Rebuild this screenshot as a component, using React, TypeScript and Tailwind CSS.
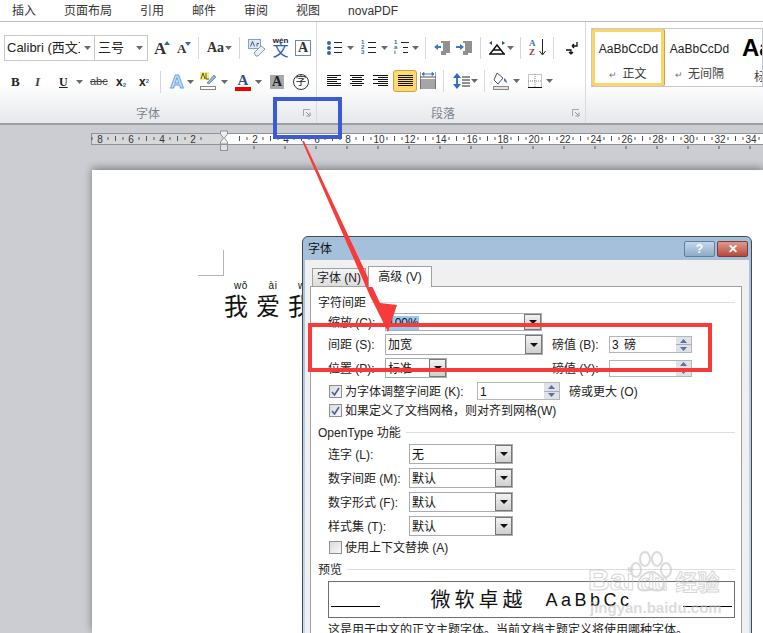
const sans = "font-['Liberation_Sans','Noto_Sans_CJK_SC',sans-serif]";

const menuItems = [
  { name: "插入", cls: "ml-[12px]" },
  { name: "页面布局", cls: "ml-[28px]" },
  { name: "引用", cls: "ml-[28px]" },
  { name: "邮件", cls: "ml-[28px]" },
  { name: "审阅", cls: "ml-[28px]" },
  { name: "视图", cls: "ml-[28px]" },
  { name: "novaPDF", cls: "ml-[28px]" },
];

const Caret = ({ className = "" }: { className?: string }) => (
  <svg width="7" height="4" viewBox="0 0 7 4" className={className}>
    <path d="M0 0h7L3.5 4z" fill="#6a6a6a" />
  </svg>
);

const BlueTri = ({ up = false }: { up?: boolean }) => (
  <svg width="6" height="4" viewBox="0 0 6 4" className="shrink-0">
    <path d={up ? "M0 4h6L3 0z" : "M0 0h6L3 4z"} fill="#3565b0" />
  </svg>
);

const Sep = ({ className = "" }: { className?: string }) => (
  <div className={`w-px h-[22px] bg-[#d5d7db] ${className}`} />
);

// horizontal text lines, used by the alignment buttons
const Lines = ({ rows, className = "" }: { rows: [number, number][]; className?: string }) => (
  <svg width="16" height="14" viewBox="0 0 16 14" className={className}>
    {rows.map(([x, w], i) => (
      <rect key={i} x={x} y={1 + i * 2} width={w} height="1" fill="#111" />
    ))}
  </svg>
);

const ListIcon = ({ marks, indent = false }: { marks: string[]; indent?: boolean }) => (
  <div className="w-[15px] h-[15px] flex flex-col">
    {marks.map((m, i) => (
      <div key={i} className="flex items-center h-[5px]">
        {m === "dot" ? (
          <span className="w-[4px] h-[4px] mr-[2px] rounded-full bg-[#3565b0] shrink-0" />
        ) : (
          <span className="w-[6px] text-[6px] leading-[5px] font-bold text-[#3565b0] shrink-0">{m}</span>
        )}
        <div className={`h-px bg-[#222] ${indent && i > 0 ? "ml-[3px] w-[5px]" : "ml-[1px] w-[8px]"}`} />
      </div>
    ))}
  </div>
);

const Launcher = ({ className = "" }: { className?: string }) => (
  <svg width="8" height="8" viewBox="0 0 8 8" className={className}>
    <path d="M.5 7V.5H7" fill="none" stroke="#a3a7ad" />
    <path d="M3 3l3 3M7 3.500V7H3.500" fill="none" stroke="#8f949b" />
  </svg>
);

const FontRibbon = () => (
  <div className="relative w-[317px] border-r border-[#d8dade] flex flex-col">
    <div className="flex items-center h-[26px] mt-[13px] pl-[4px]">
      <div className="w-[91px] h-[26px] border border-[#c4c8ce] bg-white flex items-center pl-[2px] text-[13px] text-[#222]">
        <span className="w-[73px] overflow-hidden whitespace-nowrap">Calibri (西文正文)</span>
        <Caret className="ml-[4px]" />
      </div>
      <div className="w-[53px] h-[26px] border border-l-0 border-[#c4c8ce] bg-white flex items-center pl-[3px] text-[13px] text-[#222]">
        <span className="w-[38px]">三号</span>
        <Caret />
      </div>
      <div className="ml-[6px] w-[16px] flex items-start font-['Liberation_Serif'] font-bold text-[17px] leading-none text-[#333]">
        A
        <span className="-ml-[2px] mt-[1px]">
          <BlueTri up />
        </span>
      </div>
      <div className="ml-[7px] w-[14px] flex items-start font-['Liberation_Serif'] font-bold text-[13px] leading-none text-[#333]">
        A
        <span className="-ml-[1px]">
          <BlueTri />
        </span>
      </div>
      <Sep className="ml-[7px]" />
      <div className="ml-[8px] w-[25px] flex items-center font-['Liberation_Serif'] font-bold text-[14px] leading-none text-[#333]">
        Aa
        <Caret className="ml-[1px]" />
      </div>
      <Sep className="ml-[7px]" />
      <svg width="18" height="18" viewBox="0 0 18 18" className="ml-[8px]">
        <rect x=".5" y=".5" width="12" height="9" fill="#dbe8f6" stroke="#7ca3d0" />
        <path d="M6 14l7-7 4 3-7 7H8z" fill="#eef0f3" stroke="#8a95a3" />
        <path d="M2.500 7.500l2-5 2 5M9 7.500V4.500h2" fill="none" stroke="#335" strokeWidth=".8" />
      </svg>
      <div className="ml-[6px] w-[17px] flex flex-col items-center leading-none">
        <span className="text-[8px] font-bold text-[#222] -mb-[2px]">wén</span>
        <span className="text-[16px] text-[#2c5fb3]">文</span>
      </div>
      <div className="ml-[6px] w-[16px] h-[16px] border border-[#6d8bab] bg-white flex items-center justify-center font-['Liberation_Serif'] font-bold text-[14px] leading-none text-[#333]">
        A
      </div>
    </div>
    <div className="flex items-center h-[26px] mt-[8px] pl-[11px] text-[#222]">
      <span className="w-[24px] font-['Liberation_Serif'] font-bold text-[13px]">B</span>
      <span className="w-[22px] font-['Liberation_Serif'] font-bold italic text-[13px] text-[#444]">I</span>
      <span className="ml-[2px] w-[16px] font-['Liberation_Serif'] font-bold text-[12px] underline">U</span>
      <Caret className="ml-[1px]" />
      <span className="ml-[7px] w-[24px] text-[11px] line-through text-[#444]">abc</span>
      <span className="ml-[2px] w-[23px] font-bold text-[12px] leading-none">
        x<sub className="text-[6px] text-[#3565b0]">2</sub>
      </span>
      <span className="w-[20px] font-bold text-[12px] leading-none">
        x<sup className="text-[6px] text-[#3565b0]">2</sup>
      </span>
      <Sep className="ml-[1px]" />
      <span className="ml-[9px] w-[15px] font-bold text-[19px] leading-none text-[#cfe4fa] [-webkit-text-stroke:1px_#6fa4de]">A</span>
      <Caret className="ml-[2px]" />
      <svg width="17" height="19" viewBox="0 0 17 19" className="ml-[6px]">
        <rect x="0" y="0" width="9" height="8" fill="#f5f06a" />
        <path d="M1 7l2-6 2 6M6 1v6h3" fill="none" stroke="#333" strokeWidth=".8" />
        <path d="M7 11l7-8 2 2-7 7z" fill="#8fb3da" stroke="#55779c" strokeWidth=".7" />
        <rect x=".5" y="14.500" width="15" height="3" fill="#fff" stroke="#888" />
      </svg>
      <Caret className="ml-[4px]" />
      <div className="ml-[7px] w-[16px] flex flex-col items-center leading-none">
        <span className="font-['Liberation_Serif'] font-bold text-[15px] -mb-px text-[#2f4f8f]">A</span>
        <div className="w-[16px] h-[4px] bg-[#f00000]" />
      </div>
      <Caret className="ml-[4px]" />
      <div className="ml-[8px] w-[14px] h-[14px] bg-[#a6a8ab] flex items-center justify-center font-['Liberation_Serif'] font-bold text-[14px] leading-none text-[#222]">
        A
      </div>
      <div className="ml-[9px] w-[16px] h-[16px] rounded-full border border-[#333] flex items-center justify-center text-[11px] leading-none">
        字
      </div>
    </div>
    <div className="flex-1 relative flex items-center justify-center pr-[20px] pt-[11px] text-[12px] text-[#7c8590]">
      字体
      <Launcher className="absolute right-[5px] top-[15px]" />
    </div>
  </div>
);

const ParagraphRibbon = () => (
  <div className="relative w-[269px] border-r border-[#d8dade] flex flex-col">
    <div className="flex items-center h-[26px] mt-[13px] pl-[10px]">
      <ListIcon marks={["dot", "dot", "dot"]} />
      <Caret className="ml-[5px]" />
      <div className="ml-[7px]">
        <ListIcon marks={["1", "2", "3"]} />
      </div>
      <Caret className="ml-[5px]" />
      <div className="ml-[6px]">
        <ListIcon marks={["1", "a", "i"]} indent />
      </div>
      <Caret className="ml-[3px]" />
      <Sep className="ml-[6px]" />
      <svg width="17" height="14" viewBox="0 0 17 14" className="ml-[8px]">
        <path d="M7 1h9M9 3h7M9 5h7M9 7h7M9 9h7M7 11h9M7 13h5" stroke="#222" />
        <path d="M0 6l4-3v2h3v2H4v2z" fill="#3a78c8" />
      </svg>
      <svg width="17" height="14" viewBox="0 0 17 14" className="ml-[5px]">
        <path d="M7 1h9M9 3h7M9 5h7M9 7h7M9 9h7M7 11h9M7 13h5" stroke="#222" />
        <path d="M8 6L4 3v2H0v2h4v2z" fill="#3a78c8" />
      </svg>
      <Sep className="ml-[7px]" />
      <svg width="17" height="14" viewBox="0 0 17 14" className="ml-[8px]">
        <path d="M1 13L8 4l7 9M4 9h8M0 13h16" fill="none" stroke="#111" strokeWidth="1.4" />
        <path d="M0 2l3-2v4zM16 2l-3-2v4zM3 1.500h2M11 1.500h2" fill="#1f4f9c" />
      </svg>
      <Caret className="ml-[1px]" />
      <Sep className="ml-[6px]" />
      <div className="ml-[8px] w-[10px] flex flex-col font-['Liberation_Serif'] font-bold text-[9px] leading-[9px]">
        <span className="text-[#3a6fb5]">A</span>
        <span className="text-[#a33]">Z</span>
      </div>
      <svg width="7" height="17" viewBox="0 0 7 17">
        <path d="M3.500 0v15M0.500 12l3 4 3-4" fill="none" stroke="#222" />
      </svg>
      <Sep className="ml-[7px]" />
      <svg width="13" height="14" viewBox="0 0 13 14" className="ml-[11px]">
        <path d="M12 1v4H7M7 5l2-2M7 5l2 2M1 9h5v4M6 13l-2-2M6 13l2-2" fill="none" stroke="#111" strokeWidth="1.3" />
      </svg>
    </div>
    <div className="flex items-center h-[26px] mt-[8px] pl-[10px]">
      <Lines rows={[[0, 14], [0, 10], [0, 14], [0, 10], [0, 14], [0, 14]]} />
      <Lines className="ml-[7px]" rows={[[0, 14], [2, 10], [0, 14], [2, 10], [0, 14], [2, 10]]} />
      <Lines className="ml-[7px]" rows={[[0, 15], [5, 10], [0, 15], [5, 10], [0, 15], [5, 10]]} />
      <div className="ml-[4px] w-[24px] h-[22px] rounded-[3px] border border-[#c9a24a] bg-[#ffd96e] flex items-center justify-center">
        <Lines className="ml-[1px]" rows={[[0, 15], [0, 15], [0, 15], [0, 15], [0, 15], [0, 15]]} />
      </div>
      <svg width="16" height="18" viewBox="0 0 16 18" className="ml-[3px]">
        <path d="M0 5h16M0 8h16M0 10h16M0 12h16M0 14h16M0 16h16M0 0v17M16 0v17" stroke="#222" strokeWidth=".8" />
        <path d="M2 2h12M2 2l2-1.500v3zM14 2l-2-1.500v3z" stroke="#3a78c8" fill="#3a78c8" />
      </svg>
      <Sep className="ml-[7px]" />
      <svg width="8" height="16" viewBox="0 0 8 16" className="ml-[9px]">
        <path d="M4 1v14" stroke="#3a78c8" strokeWidth="2" />
        <path d="M0 5l4-5 4 5zM0 11l4 5 4-5z" fill="#2f6bc0" />
      </svg>
      <svg width="9" height="12" viewBox="0 0 9 12">
        <path d="M1 2h8M1 5h8M1 8h8M1 11h8" stroke="#222" />
      </svg>
      <Caret className="ml-[1px]" />
      <Sep className="ml-[6px]" />
      <svg width="16" height="18" viewBox="0 0 16 18" className="ml-[8px]">
        <path d="M4 1l6 5-5 6-4-4z" fill="#fff" stroke="#555" />
        <path d="M11 6c2 1 3 3 3 5l-3-2z" fill="#3a78c8" />
        <rect x=".5" y="14.500" width="15" height="3" fill="#e3e3e3" stroke="#888" />
      </svg>
      <Caret className="ml-[4px]" />
      <svg width="14" height="14" viewBox="0 0 14 14" className="ml-[8px]">
        <rect x=".5" y=".5" width="13" height="13" fill="none" stroke="#888" strokeDasharray="1 1" />
        <path d="M7 0v14M0 7h14" stroke="#888" strokeDasharray="1 1" />
        <path d="M0 13.500h14" stroke="#111" />
      </svg>
      <Caret className="ml-[4px]" />
    </div>
    <div className="flex-1 relative flex items-center justify-center pr-[16px] pt-[11px] text-[12px] text-[#7c8590]">
      段落
      <Launcher className="absolute right-[5px] top-[15px]" />
    </div>
  </div>
);

const StylesRibbon = () => (
  <div className="flex-1 pl-[5px] pt-[6px] min-w-0">
    <div className="flex h-[59px] border border-[#c4c8ce] bg-white overflow-hidden">
      <div className="w-[72px] shrink-0 rounded-[2px] border-[3px] border-[#fbd568] outline outline-[#c9a24a] flex flex-col items-center text-[12px] text-[#222]">
        <span className="ml-[1px] mt-[9px] leading-[16px]">AaBbCcDd</span>
        <span className="mt-[9px] leading-[16px] text-[12px] text-[#333]">
          <span className="text-[#777] text-[9px] mr-[5px]">↵</span>正文
        </span>
      </div>
      <div className="w-[71px] shrink-0 flex flex-col items-center text-[12px] text-[#222]">
        <span className="mt-[12px] leading-[16px]">AaBbCcDd</span>
        <span className="mt-[9px] leading-[16px] text-[#444]">
          <span className="text-[#777] text-[9px] mr-[5px]">↵</span>无间隔
        </span>
      </div>
      <div className="flex flex-col pl-[7px] whitespace-nowrap">
        <span className="font-bold text-[24px] leading-[28px] mt-[5px] text-black">AaB</span>
        <span className="mt-[7px] pl-[12px] text-[12px] leading-[16px] text-[#444]">标题 1</span>
      </div>
    </div>
  </div>
);

const rulerLeft = [
  { x: 100, t: "8" },
  { x: 131, t: "6" },
  { x: 162, t: "4" },
  { x: 193, t: "2" },
];
const rulerRight = Array.from({ length: 17 }, (_, i) => ({ x: 255 + i * 31, t: String((i + 1) * 2) }));

const Ruler = () => (
  <svg width="763" height="24" viewBox="0 0 763 24" className="block mt-[5px]">
    <rect x="91.500" y="3.500" width="680" height="11" fill="#fff" stroke="#8f9297" />
    <rect x="92" y="4" width="132" height="10" fill="#d6d8da" />
    {[...rulerLeft, ...rulerRight].map((m) => (
      <g key={m.x}>
        <text x={m.x} y="13" textAnchor="middle" fontSize="10" fontFamily="Liberation Sans" fill="#333">
          {m.t}
        </text>
        <path d={`${m.x > 100 ? `M${m.x - 15.500} 6v5` : ""}M${m.x - 8} 7v3M${m.x + 8} 7v3`} stroke="#555" />
      </g>
    ))}
    {rulerRight.map((m) => (
      <path key={m.x} d={`M${m.x - 1} 16v3`} stroke="#555" />
    ))}
    <path d="M220.500 1h7v3l-3 4 3 4v2h-7v-2l3-4-3-4z" fill="#eceef0" stroke="#8f9297" />
    <rect x="220.500" y="14.500" width="7" height="6" fill="#dfe1e4" stroke="#8f9297" />
  </svg>
);

const Combo = ({ text, className = "", selected = false }: { text: string; className?: string; selected?: boolean }) => (
  <div className={`flex items-center border border-[#a9abb0] bg-white pl-[2px] ${className}`}>
    <span className="flex-1 pt-[1px] text-[12px] leading-none text-[#111]">
      <span className={selected ? "bg-[#99c9ef]" : ""}>{text}</span>
    </span>
    <div className="w-[17px] h-full border border-[#777] bg-gradient-to-b from-[#f2f2f2] to-[#cfcfcf] flex items-center justify-center">
      <svg width="8" height="4" viewBox="0 0 8 4">
        <path d="M0 0h8L4 4z" fill="#111" />
      </svg>
    </div>
  </div>
);

const Spin = ({ text, className = "" }: { text: string; className?: string }) => (
  <div className={`flex items-center border border-[#b4b6ba] bg-white pl-[2px] ${className}`}>
    <span className="flex-1 pt-[1px] text-[12px] leading-none tracking-[1px] text-[#111]">{text}</span>
    <div className="w-[15px] h-full flex flex-col bg-[#dfe3e8]">
      <div className="flex-1 flex items-center justify-center border-b border-[#a8adb3]">
        <svg width="7" height="4" viewBox="0 0 7 4">
          <path d="M0 4h7L3.500 0z" fill="#5a6fa8" />
        </svg>
      </div>
      <div className="flex-1 flex items-center justify-center">
        <svg width="7" height="4" viewBox="0 0 7 4">
          <path d="M0 0h7L3.500 4z" fill="#5a6fa8" />
        </svg>
      </div>
    </div>
  </div>
);

const Check = ({ on = false }: { on?: boolean }) => (
  <div className="w-[13px] h-[13px] border border-[#8e8f8f] bg-gradient-to-br from-[#dcdcdc] to-[#f6f6f6] flex items-center justify-center shrink-0">
    {on && (
      <svg width="9" height="9" viewBox="0 0 9 9">
        <path d="M1 5l2.500 3L8 1" fill="none" stroke="#4a5f97" strokeWidth="1.600" />
      </svg>
    )}
  </div>
);

const SectionTitle = ({ text, className = "" }: { text: string; className?: string }) => (
  <div className={`flex items-center h-[16px] pl-[7px] pr-[6px] text-[12px] text-[#222] ${className}`}>
    <span className="whitespace-nowrap">{text}</span>
    <div className="flex-1 h-px ml-[5px] bg-[#d5dfe5]" />
  </div>
);

const openTypeRows = [
  { label: "连字 (L):", value: "无" },
  { label: "数字间距 (M):", value: "默认" },
  { label: "数字形式 (F):", value: "默认" },
  { label: "样式集 (T):", value: "默认" },
];

const FontDialog = () => (
  <div className="absolute left-[302px] top-[236px] w-[450px] h-[420px] rounded-t-[6px] border border-[#444a50] bg-gradient-to-b from-[#a4bfda] to-[#c8dcef] flex flex-col px-[1px]">
    <div className="h-[23px] flex items-center pl-[4px] text-[12px] text-[#111]">
      <span className="flex-1 mt-[1px]">字体</span>
      <div className="w-[31px] h-[16px] rounded-[2px] border border-[#5f7f9e] bg-gradient-to-b from-[#c5d8ea] to-[#8fabc7] flex items-center justify-center text-[12px] font-bold leading-none text-white">
        ?
      </div>
      <div className="ml-[2px] mr-[2px] w-[31px] h-[16px] rounded-[2px] border border-[#7c3c34] bg-gradient-to-b from-[#dd9a8f] to-[#b7483b] flex items-center justify-center text-[12px] font-bold leading-none text-white">
        ✕
      </div>
    </div>
    <div className="flex-1 mx-[1px] bg-[#f0f0f0] flex flex-col pl-[5px] pr-[7px]">
      <div className="flex items-end h-[26px] pl-[2px] text-[12px] text-[#222]">
        <div className="w-[54px] h-[18px] border border-b-0 border-[#a0a0a0] bg-gradient-to-b from-[#f4f4f4] to-[#dcdcdc] flex items-center justify-center">
          字体 (N)
        </div>
        <div className="w-[64px] h-[21px] ml-[2px] -mb-px z-10 border border-b-0 border-[#a0a0a0] bg-white flex items-center justify-center">
          高级 (V)
        </div>
      </div>
      <div className="flex-1 border border-[#a0a0a0] bg-white flex flex-col text-[12px] text-[#222] [&>div>span]:pt-[1px]">
        <SectionTitle text="字符间距" className="mt-[7px]" />
        <div className="flex items-center h-[18px] mt-[3px] pl-[17px]">
          <span className="w-[57px] whitespace-nowrap">缩放 (C):</span>
          <Combo text="100%" selected className="w-[157px] h-[18px]" />
        </div>
        <div className="flex items-center h-[21px] mt-[3px] pl-[17px]">
          <span className="w-[57px] whitespace-nowrap">间距 (S):</span>
          <Combo text="加宽" className="w-[158px] h-[21px]" />
          <span className="ml-[9px] w-[57px] whitespace-nowrap">磅值 (B):</span>
          <Spin text="3 磅" className="w-[83px] h-[17px]" />
        </div>
        <div className="flex items-center h-[20px] mt-[3px] pl-[17px]">
          <span className="w-[57px] whitespace-nowrap">位置 (P):</span>
          <Combo text="标准" className="w-[62px] h-[20px]" />
          <span className="ml-[105px] w-[57px] whitespace-nowrap">磅值 (Y):</span>
          <Spin text="" className="w-[83px] h-[17px]" />
        </div>
        <div className="flex items-center h-[18px] mt-[4px] pl-[18px]">
          <Check on />
          <span className="ml-[3px] w-[132px] whitespace-nowrap">为字体调整字间距 (K):</span>
          <Spin text="1" className="w-[83px] h-[18px]" />
          <span className="ml-[9px] whitespace-nowrap">磅或更大 (O)</span>
        </div>
        <div className="flex items-center h-[18px] mt-[1px] pl-[18px]">
          <Check on />
          <span className="ml-[3px] whitespace-nowrap">如果定义了文档网格，则对齐到网格(W)</span>
        </div>
        <SectionTitle text="OpenType 功能" className="mt-[5px]" />
        {openTypeRows.map((r) => (
          <div key={r.label} className="flex items-center h-[20px] mt-[4px] pl-[17px]">
            <span className="w-[81px] whitespace-nowrap">{r.label}</span>
            <Combo text={r.value} className="w-[104px] h-[20px]" />
          </div>
        ))}
        <div className="flex items-center h-[18px] mt-[2px] pl-[18px]">
          <Check />
          <span className="ml-[3px] whitespace-nowrap">使用上下文替换 (A)</span>
        </div>
        <SectionTitle text="预览" className="mt-[5px]" />
        <div className="relative mt-[4px] ml-[17px] mr-[6px] h-[37px] border border-[#6e6e6e] flex items-center justify-center">
          <div className="absolute left-[2px] right-[2px] bottom-[10px] flex justify-between">
            <div className="w-[49px] h-px bg-black" />
            <div className="w-[49px] h-px bg-black" />
          </div>
          <span className="text-[20px] leading-none tracking-[4px] text-[#111] whitespace-nowrap">微软卓越</span>
          <span className="ml-[19px] text-[18px] leading-none tracking-[3.500px] text-[#111] whitespace-nowrap">AaBbCc</span>
        </div>
        <div className="mt-[4px] pl-[17px] leading-[16px] whitespace-nowrap">
          这是用于中文的正文主题字体。当前文档主题定义将使用哪种字体。
        </div>
      </div>
    </div>
  </div>
);

const Watermark = () => (
  <div className="absolute left-[588px] top-[550px] w-[140px] h-[68px] opacity-60 pointer-events-none">
    <svg width="50" height="44" viewBox="0 0 50 44" className="absolute left-[36px] top-0">
      <g fill="none" stroke="#c4c4c4" strokeWidth="2">
        <ellipse cx="12" cy="20" rx="5" ry="7" />
        <ellipse cx="21" cy="9" rx="5" ry="7" />
        <ellipse cx="33" cy="9" rx="5" ry="7" />
        <ellipse cx="42" cy="20" rx="5" ry="7" />
        <path d="M14 36c0-8 7-14 13-14s13 6 13 14c0 6-9 5-13 3-4 2-13 3-13-3z" />
      </g>
    </svg>
    <div className="absolute left-0 top-[15px] flex items-baseline font-bold text-[30px] leading-none whitespace-nowrap text-transparent [-webkit-text-stroke:1px_#bdbdbd]">
      <span>Bai</span>
      <span className="ml-[6px] text-[22px]">du</span>
      <span className="ml-[8px] text-[22px]">经验</span>
    </div>
    <div className="absolute left-[2px] top-[50px] text-[15px] font-bold leading-none whitespace-nowrap text-[#c4c4c4]">jingyan.baidu.com</div>
  </div>
);

export default function App() {
  return (
    <div className={`relative w-[763px] h-[633px] overflow-hidden bg-[#cbcdd2] flex flex-col ${sans}`}>
      <div className="h-[22px] shrink-0 bg-white border-b border-[#b9bcc2] flex items-center text-[12px] text-[#333]">
        {menuItems.map((m) => (
          <span key={m.name} className={m.cls}>
            {m.name}
          </span>
        ))}
      </div>
      <div className="h-[103px] shrink-0 flex bg-gradient-to-b from-white from-60% to-[#e6e8eb] border-b-2 border-[#9b9ea3]">
        <FontRibbon />
        <ParagraphRibbon />
        <StylesRibbon />
      </div>
      <Ruler />
      <div className="flex-1 ml-[92px] mt-[16px] bg-white shadow-[0_-2px_8px_rgba(0,0,0,0.4)] pl-[106px] pt-[80px]">
        <div className="w-[26px] h-[26px] border-r border-b border-[#b5b5b5]" />
        <div className="flex ml-[22px] mt-[4px] w-[96px] text-[#111]">
          {[
            { py: "wǒ", hz: "我" },
            { py: "ài", hz: "爱" },
            { py: "wǒ", hz: "我" },
          ].map((c, i) => (
            <div key={i} className="w-[32px] flex flex-col items-center">
              <span className="pl-[10px] text-[10px] leading-[12px] tracking-[0.5px]">{c.py}</span>
              <span className="text-[24px] leading-[30px]">{c.hz}</span>
            </div>
          ))}
        </div>
      </div>

      <FontDialog />
      <Watermark />

      {/* annotations drawn over the screenshot */}
      <div className="absolute left-[273px] top-[97px] w-[69px] h-[42px] border-[4px] border-[#3b5bd6]" />
      <div className="absolute left-[308px] top-[323px] w-[404px] h-[49px] border-[4px] border-[#f73b3b]" />
      <svg width="763" height="633" viewBox="0 0 763 633" className="absolute left-0 top-0 pointer-events-none">
        <path d="M302 141L304 141L380 303L397 305L388 332L370 296Z" fill="#f73b3b" />
      </svg>
    </div>
  );
}
